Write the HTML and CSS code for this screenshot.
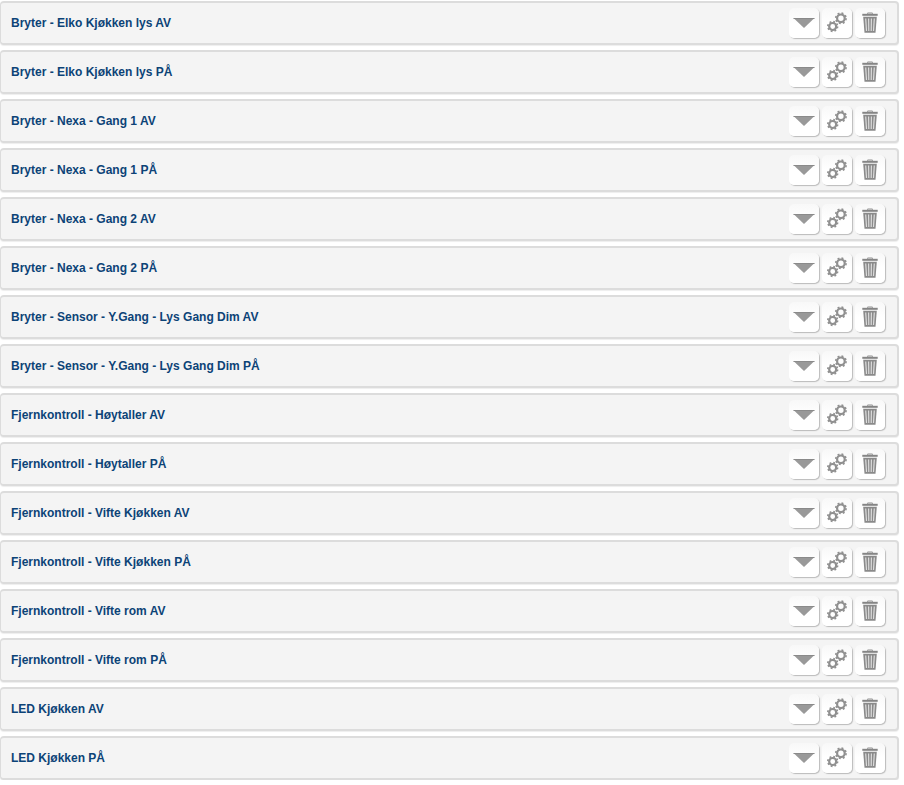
FILE: index.html
```
<!DOCTYPE html>
<html lang="no">
<head>
<meta charset="utf-8">
<title>Scener</title>
<link rel="stylesheet" href="styles.css">
</head>
<body>
<svg class="sprite" aria-hidden="true">
  <symbol id="arrow" viewBox="0 0 30 30"><path d="M4.500 10h21L15 20z" fill="#999"/><path d="M4.500 10.500h21" stroke="#8a8a8a"/></symbol>
  <symbol id="gears" viewBox="0 0 30 30">
    <g fill="none" stroke="#909090">
      <circle cx="18.900" cy="10.300" r="3.800" stroke-width="2.200"/>
      <circle cx="18.900" cy="10.300" r="5.200" stroke-width="1.600" stroke-dasharray="1.900 2.184"/>
      <circle cx="10.700" cy="18.500" r="3.500" stroke-width="2.200"/>
      <circle cx="10.700" cy="18.500" r="4.900" stroke-width="1.600" stroke-dasharray="1.800 2.048"/>
    </g>
  </symbol>
  <symbol id="trash" viewBox="0 0 30 30">
    <path d="M12.500 5.700V5h5v.7" fill="none" stroke="#909090" stroke-width="1"/>
    <path d="M7.300 5.800h15.400v2H7.300z" fill="#858585"/>
    <path d="M8.200 8.800h13.600l-1.300 16H9.500z" fill="#8a8a8a"/>
    <path d="M10.700 10.500l.8 12.500M13.600 10.500l.2 12.500M16.400 10.500l-.2 12.500M19.300 10.500l-.8 12.500" stroke="#dcdcdc" stroke-width="1.200"/>
  </symbol>
</svg>
<ul class="list">
  <li class="row"><a class="name" href="#">Bryter - Elko Kjøkken lys AV</a><button class="btn" aria-label="Vis"><svg><use href="#arrow"/></svg></button><button class="btn" aria-label="Innstillinger"><svg><use href="#gears"/></svg></button><button class="btn" aria-label="Slett"><svg><use href="#trash"/></svg></button></li>
  <li class="row"><a class="name" href="#">Bryter - Elko Kjøkken lys PÅ</a><button class="btn" aria-label="Vis"><svg><use href="#arrow"/></svg></button><button class="btn" aria-label="Innstillinger"><svg><use href="#gears"/></svg></button><button class="btn" aria-label="Slett"><svg><use href="#trash"/></svg></button></li>
  <li class="row"><a class="name" href="#">Bryter - Nexa - Gang 1 AV</a><button class="btn" aria-label="Vis"><svg><use href="#arrow"/></svg></button><button class="btn" aria-label="Innstillinger"><svg><use href="#gears"/></svg></button><button class="btn" aria-label="Slett"><svg><use href="#trash"/></svg></button></li>
  <li class="row"><a class="name" href="#">Bryter - Nexa - Gang 1 PÅ</a><button class="btn" aria-label="Vis"><svg><use href="#arrow"/></svg></button><button class="btn" aria-label="Innstillinger"><svg><use href="#gears"/></svg></button><button class="btn" aria-label="Slett"><svg><use href="#trash"/></svg></button></li>
  <li class="row"><a class="name" href="#">Bryter - Nexa - Gang 2 AV</a><button class="btn" aria-label="Vis"><svg><use href="#arrow"/></svg></button><button class="btn" aria-label="Innstillinger"><svg><use href="#gears"/></svg></button><button class="btn" aria-label="Slett"><svg><use href="#trash"/></svg></button></li>
  <li class="row"><a class="name" href="#">Bryter - Nexa - Gang 2 PÅ</a><button class="btn" aria-label="Vis"><svg><use href="#arrow"/></svg></button><button class="btn" aria-label="Innstillinger"><svg><use href="#gears"/></svg></button><button class="btn" aria-label="Slett"><svg><use href="#trash"/></svg></button></li>
  <li class="row"><a class="name" href="#">Bryter - Sensor - Y.Gang - Lys Gang Dim AV</a><button class="btn" aria-label="Vis"><svg><use href="#arrow"/></svg></button><button class="btn" aria-label="Innstillinger"><svg><use href="#gears"/></svg></button><button class="btn" aria-label="Slett"><svg><use href="#trash"/></svg></button></li>
  <li class="row"><a class="name" href="#">Bryter - Sensor - Y.Gang - Lys Gang Dim PÅ</a><button class="btn" aria-label="Vis"><svg><use href="#arrow"/></svg></button><button class="btn" aria-label="Innstillinger"><svg><use href="#gears"/></svg></button><button class="btn" aria-label="Slett"><svg><use href="#trash"/></svg></button></li>
  <li class="row"><a class="name" href="#">Fjernkontroll - Høytaller AV</a><button class="btn" aria-label="Vis"><svg><use href="#arrow"/></svg></button><button class="btn" aria-label="Innstillinger"><svg><use href="#gears"/></svg></button><button class="btn" aria-label="Slett"><svg><use href="#trash"/></svg></button></li>
  <li class="row"><a class="name" href="#">Fjernkontroll - Høytaller PÅ</a><button class="btn" aria-label="Vis"><svg><use href="#arrow"/></svg></button><button class="btn" aria-label="Innstillinger"><svg><use href="#gears"/></svg></button><button class="btn" aria-label="Slett"><svg><use href="#trash"/></svg></button></li>
  <li class="row"><a class="name" href="#">Fjernkontroll - Vifte Kjøkken AV</a><button class="btn" aria-label="Vis"><svg><use href="#arrow"/></svg></button><button class="btn" aria-label="Innstillinger"><svg><use href="#gears"/></svg></button><button class="btn" aria-label="Slett"><svg><use href="#trash"/></svg></button></li>
  <li class="row"><a class="name" href="#">Fjernkontroll - Vifte Kjøkken PÅ</a><button class="btn" aria-label="Vis"><svg><use href="#arrow"/></svg></button><button class="btn" aria-label="Innstillinger"><svg><use href="#gears"/></svg></button><button class="btn" aria-label="Slett"><svg><use href="#trash"/></svg></button></li>
  <li class="row"><a class="name" href="#">Fjernkontroll - Vifte rom AV</a><button class="btn" aria-label="Vis"><svg><use href="#arrow"/></svg></button><button class="btn" aria-label="Innstillinger"><svg><use href="#gears"/></svg></button><button class="btn" aria-label="Slett"><svg><use href="#trash"/></svg></button></li>
  <li class="row"><a class="name" href="#">Fjernkontroll - Vifte rom PÅ</a><button class="btn" aria-label="Vis"><svg><use href="#arrow"/></svg></button><button class="btn" aria-label="Innstillinger"><svg><use href="#gears"/></svg></button><button class="btn" aria-label="Slett"><svg><use href="#trash"/></svg></button></li>
  <li class="row"><a class="name" href="#">LED Kjøkken AV</a><button class="btn" aria-label="Vis"><svg><use href="#arrow"/></svg></button><button class="btn" aria-label="Innstillinger"><svg><use href="#gears"/></svg></button><button class="btn" aria-label="Slett"><svg><use href="#trash"/></svg></button></li>
  <li class="row"><a class="name" href="#">LED Kjøkken PÅ</a><button class="btn" aria-label="Vis"><svg><use href="#arrow"/></svg></button><button class="btn" aria-label="Innstillinger"><svg><use href="#gears"/></svg></button><button class="btn" aria-label="Slett"><svg><use href="#trash"/></svg></button></li>
</ul>
</body>
</html>
```
FILE: styles.css
```
body {
  margin: 0;
  background: #fff;
  font-family: "Liberation Sans", Arial, sans-serif;
}

.sprite {
  display: none;
}

.list {
  display: flex;
  flex-direction: column;
  gap: 5px;
  margin: 0;
  padding: 1px 5px 0 0;
  list-style: none;
}

.row {
  display: flex;
  align-items: center;
  gap: 3px;
  box-sizing: border-box;
  min-height: 44px;
  padding: 0 12px 0 10px;
  background: #f4f4f4;
  border: 2px solid #dcdcdc;
  border-left-width: 1px;
  border-radius: 4px;
  box-shadow: 0 1px 1px #eee;
}

.name {
  margin-right: auto;
  color: #0c4377;
  font-size: 12px;
  font-weight: bold;
  line-height: 16px;
  text-decoration: none;
}

.btn {
  width: 30px;
  height: 30px;
  padding: 0;
  border: 0;
  border-radius: 5px;
  background: linear-gradient(#f8f8f8, #fff 50%);
  box-shadow: 1px 1px 1px #bbb;
  cursor: pointer;
}

.btn svg {
  display: block;
  width: 30px;
  height: 30px;
}
```
